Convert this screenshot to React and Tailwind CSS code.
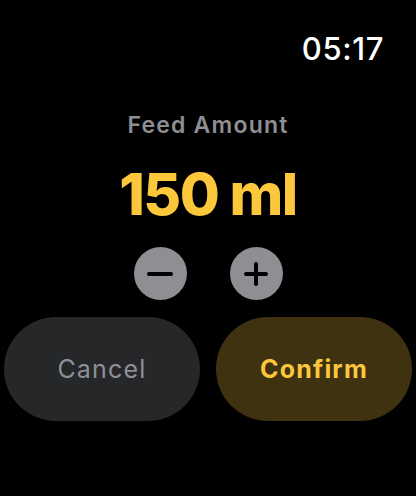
import React, { useState } from 'react';

const App = () => {
  const [amount, setAmount] = useState(150);

  return (
    <div
      className="w-[416px] h-[496px] bg-black text-white flex flex-col overflow-hidden"
      style={{ fontFamily: 'Inter, "Noto Sans", sans-serif' }}
    >
      {/* hora */}
      <div className="flex justify-end pt-[33px] pr-[32px] h-[72px]">
        <span className="text-[31px] font-medium leading-none tracking-[0.6px]">05:17</span>
      </div>

      <div className="flex flex-col items-center">
        <span className="mt-[42px] text-[23px] font-semibold leading-none tracking-[1.2px] text-[#8e8e93]">
          Feed Amount
        </span>
        <span className="mt-[28px] text-[58px] font-extrabold leading-none tracking-[-1.5px] text-[#fcc73b]">
          {amount} ml
        </span>

        <div className="mt-[24px] flex gap-[43px]">
          <button
            type="button"
            onClick={() => setAmount((a) => Math.max(0, a - 10))}
            className="w-[53px] h-[53px] rounded-full bg-[#8e8e93] flex items-center justify-center"
          >
            <span className="block w-[26px] h-[4px] rounded-full bg-black" />
          </button>
          <button
            type="button"
            onClick={() => setAmount((a) => a + 10)}
            className="w-[53px] h-[53px] rounded-full bg-[#8e8e93] flex items-center justify-center"
          >
            <svg width="26" height="26" viewBox="0 0 26 26">
              <path d="M13 3v20M3 13h20" stroke="#000" strokeWidth="4" strokeLinecap="round" />
            </svg>
          </button>
        </div>
      </div>

      <div className="mt-[17px] px-[4px] flex gap-[16px]">
        <button
          type="button"
          className="flex-1 h-[104px] rounded-full bg-[#262729] text-[#8e9099] text-[25px] font-normal tracking-[1.2px] pt-[2px]"
        >
          Cancel
        </button>
        <button
          type="button"
          className="flex-1 h-[104px] rounded-full bg-[#3f3210] text-[#fcc73b] text-[25px] font-bold tracking-[1.2px] pt-[2px]"
        >
          Confirm
        </button>
      </div>
    </div>
  );
};

export default App;
